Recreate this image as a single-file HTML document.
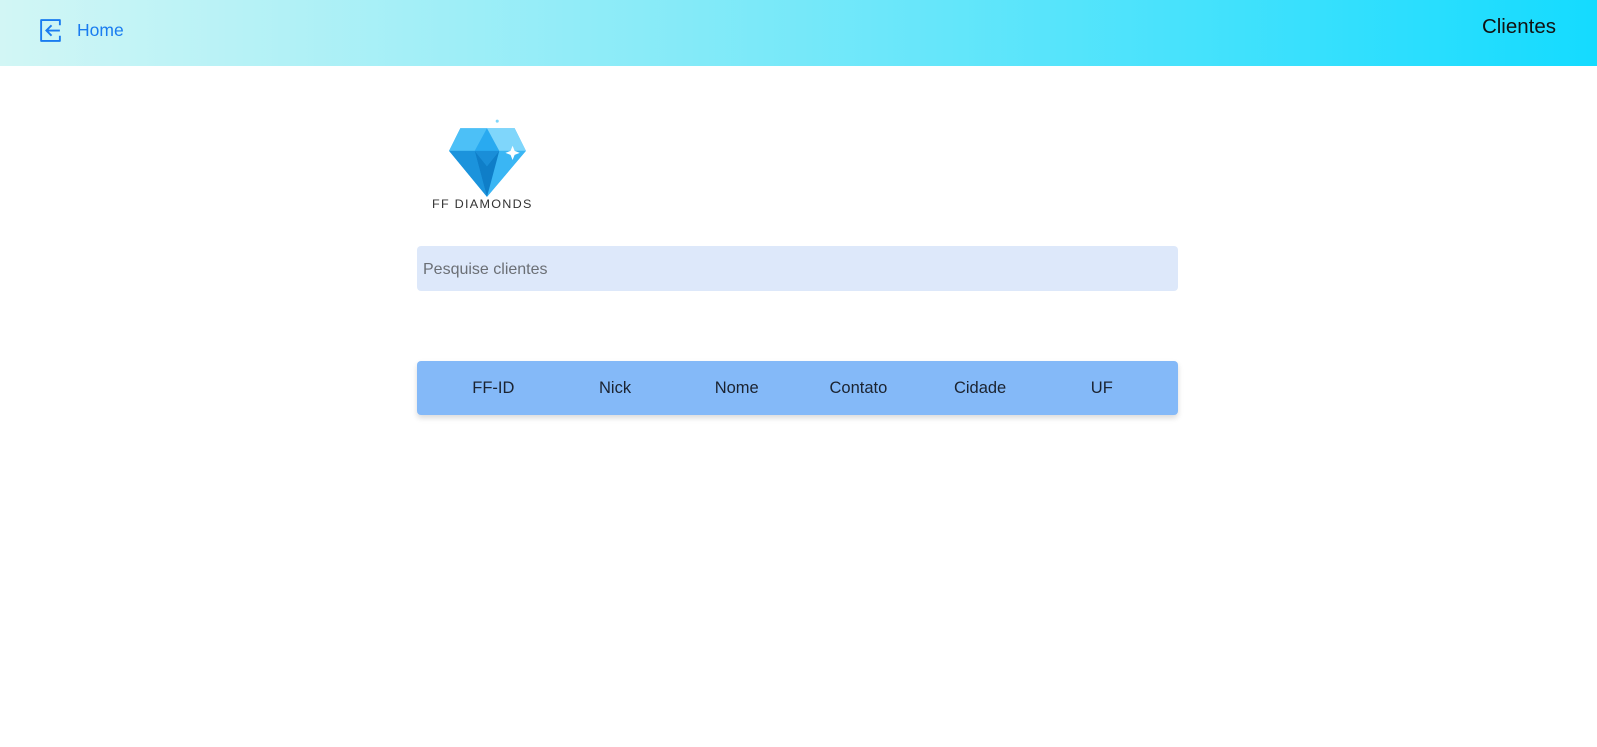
<!DOCTYPE html>
<html><head><style>
*{margin:0;padding:0;box-sizing:border-box}
body{width:1597px;height:747px;background:#fff;font-family:"Liberation Sans",sans-serif;position:relative;overflow:hidden}
.hdr{position:absolute;left:0;top:0;width:1597px;height:66px;background:linear-gradient(90deg,#d2f6f5 0%,#8aebf8 40%,#14dbff 100%)}
.home{position:absolute;left:77px;top:20px;color:#1a7cf0;font-size:17.5px}
.title{position:absolute;right:41px;top:15px;font-size:20.5px;color:#111}
.search{position:absolute;left:417px;top:246px;width:761px;height:45px;background:#dde8fa;border-radius:4px;color:#6b6f75;font-size:16px;padding:15px 6px}
.th{position:absolute;left:417px;top:361px;width:761px;height:54px;background:#84b9f8;border-radius:4px;box-shadow:0 3px 6px rgba(0,0,0,.15);padding-left:15.5px;display:flex}
.th div{width:121.7px;text-align:center;line-height:54px;font-size:16.5px;color:#1b2330}
</style></head><body>
<div class="hdr">
<svg style="position:absolute;left:38px;top:18px" width="25" height="25" viewBox="0 0 24 24" fill="none" stroke="#1a7cf0" stroke-width="1.8"><path d="M9 2H3v20h18v-5M3 2h18v5" stroke-linejoin="round"/><path d="M21 12H8M13 7l-5 5 5 5"/></svg>
<div class="home">Home</div>
<div class="title">Clientes</div>
</div>
<svg style="position:absolute;left:446px;top:117px" width="84" height="82" viewBox="0 0 82 80">
<polygon points="14,11 67,11 78,33 40,78 3,33" fill="#29aaf0"/>
<polygon points="14,11 40,11 28,33 3,33" fill="#4cc0f7"/>
<polygon points="40,11 67,11 78,33 52,33" fill="#7fd6fb"/>
<polygon points="28,33 52,33 40,48" fill="#1a8ed8"/>
<polygon points="3,33 28,33 40,78" fill="#1b93dc"/>
<polygon points="52,33 78,33 40,78" fill="#3ab6f4"/>
<polygon points="28,33 40,48 52,33 40,78" fill="#0f7ec8"/>
<path d="M65 28 l2 5 5 2 -5 2 -2 5 -2 -5 -5 -2 5 -2z" fill="#fff"/>
<circle cx="50" cy="4" r="1.5" fill="#7fd6fb"/>
</svg>
<div style="position:absolute;left:432px;top:197px;font-size:12px;letter-spacing:1.2px;color:#333;transform:scaleX(1.05);transform-origin:left">FF DIAMONDS</div>
<div class="search">Pesquise clientes</div>
<div class="th"><div>FF-ID</div><div>Nick</div><div>Nome</div><div>Contato</div><div>Cidade</div><div>UF</div></div>
</body></html>
